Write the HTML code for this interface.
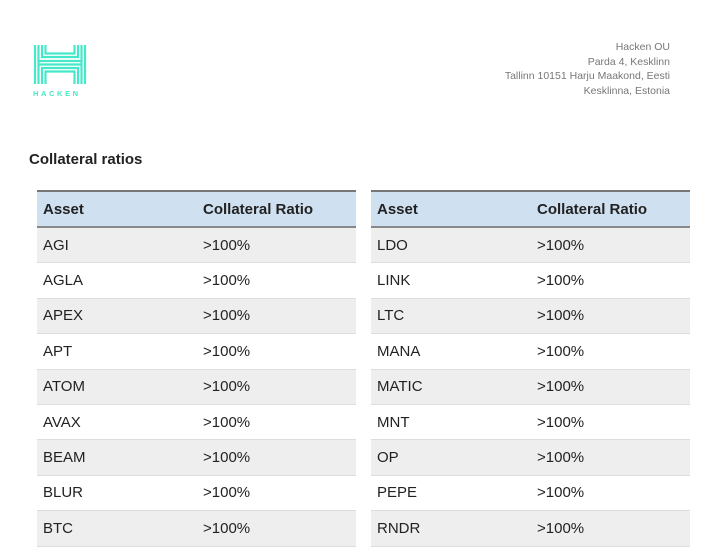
<!DOCTYPE html>
<html><head><style>
body{margin:0;width:711px;height:537px;background:#fff;font-family:"Liberation Sans",sans-serif;overflow:hidden;position:relative}
.addr{position:absolute;right:41px;top:40px;text-align:right;font-size:10.5px;line-height:14.6px;color:#777}
h2{position:absolute;left:29px;top:151px;margin:0;font-size:15px;font-weight:bold;color:#222}
table{position:absolute;top:190px;border-collapse:collapse;width:319px;font-size:15px;color:#222}
th{background:#cfe0f1;text-align:left;font-weight:bold;height:34px;padding:0 6px;border-top:2px solid #777;border-bottom:2px solid #888}
td{height:34.4px;padding:0 6px;border-bottom:1px solid #ddd}
tr:nth-child(even) td{background:#eee}
td:first-child,th:first-child{width:148px}
</style></head><body>
<svg style="position:absolute;left:32px;top:43px" width="56" height="56" viewBox="0 0 56 56" fill="none" stroke="#47e8c9" stroke-width="2.2">
<path d="M3 2V41M6.5 2V41M10 2V14H46V2M13.5 2V10.5H42.5V2M49.5 2V41M53 2V41M46 41V25H10V41M42.5 41V28.5H13.5V41M6.5 18H49.5M6.5 21.5H49.5"/>
<text x="1" y="53" font-size="7.5" font-weight="bold" fill="#47e8c9" stroke="none" font-family="Liberation Sans" letter-spacing="2.6">HACKEN</text>
</svg>
<div class="addr">Hacken OU<br>Parda 4, Kesklinn<br>Tallinn 10151 Harju Maakond, Eesti<br>Kesklinna, Estonia</div>
<h2>Collateral ratios</h2>
<table style="left:37px"><tr><th>Asset</th><th>Collateral Ratio</th></tr>
<tr><td>AGI</td><td>&gt;100%</td></tr><tr><td>AGLA</td><td>&gt;100%</td></tr><tr><td>APEX</td><td>&gt;100%</td></tr><tr><td>APT</td><td>&gt;100%</td></tr><tr><td>ATOM</td><td>&gt;100%</td></tr><tr><td>AVAX</td><td>&gt;100%</td></tr><tr><td>BEAM</td><td>&gt;100%</td></tr><tr><td>BLUR</td><td>&gt;100%</td></tr><tr><td>BTC</td><td>&gt;100%</td></tr></table>
<table style="left:371px"><tr><th>Asset</th><th>Collateral Ratio</th></tr>
<tr><td>LDO</td><td>&gt;100%</td></tr><tr><td>LINK</td><td>&gt;100%</td></tr><tr><td>LTC</td><td>&gt;100%</td></tr><tr><td>MANA</td><td>&gt;100%</td></tr><tr><td>MATIC</td><td>&gt;100%</td></tr><tr><td>MNT</td><td>&gt;100%</td></tr><tr><td>OP</td><td>&gt;100%</td></tr><tr><td>PEPE</td><td>&gt;100%</td></tr><tr><td>RNDR</td><td>&gt;100%</td></tr></table>
</body></html>
